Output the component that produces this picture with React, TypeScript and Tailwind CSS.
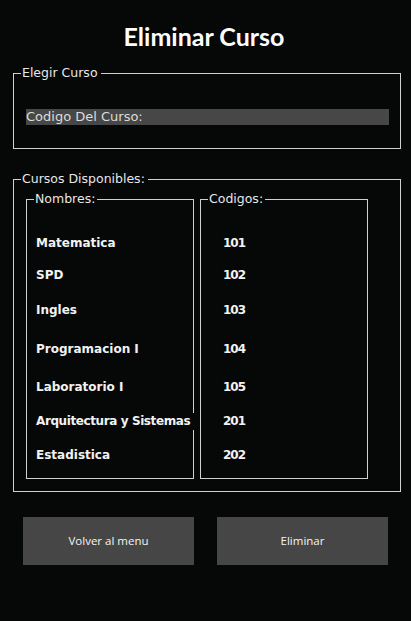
import React from "react";

const rows = [
  { name: "Matematica", code: "101", mt: "mt-[28px]" },
  { name: "SPD", code: "102", mt: "mt-[16px]" },
  { name: "Ingles", code: "103", mt: "mt-[19px]" },
  { name: "Programacion I", code: "104", mt: "mt-[23px]" },
  { name: "Laboratorio I", code: "105", mt: "mt-[22px]" },
  { name: "Arquitectura y Sistemas", code: "201", mt: "mt-[18px]" },
  { name: "Estadistica", code: "202", mt: "mt-[18px]" },
];

const dv = { fontFamily: '"DejaVu Sans", sans-serif' };

export default function App() {
  return (
    <div
      className="w-[411px] h-[621px] bg-[#060707] text-[#f2f2f2] flex flex-col overflow-hidden"
      style={dv}
    >
      <h1
        className="mt-[22px] h-[28px] leading-[28px] text-center text-[25px] font-bold text-white pr-[3px]"
        style={{ fontFamily: "Lato, sans-serif" }}
      >
        Eliminar Curso
      </h1>

      <fieldset className="ml-[13px] mt-[15px] w-[388px] min-w-0 border border-[#d0d0d0] p-0">
        <legend className="ml-[7px] pl-[1px] pr-[3px] text-[12.5px] leading-[16px] text-[#e8e8e8]">
          Elegir Curso
        </legend>
        <div className="pl-[12px] pr-[11px] pt-[28px] pb-[23px]">
          <div className="h-[16px] bg-[#474747] text-[13px] leading-[16px] text-[#dcdcdc] whitespace-nowrap">
            Codigo Del Curso:
          </div>
        </div>
      </fieldset>

      <fieldset className="ml-[13px] mt-[22px] w-[388px] min-w-0 border border-[#d0d0d0] p-0">
        <legend className="ml-[7px] pl-[1px] pr-[3px] text-[12.5px] leading-[16px] text-[#e8e8e8]">
          Cursos Disponibles:
        </legend>
        <div className="flex gap-[6px] pl-[12px] pt-[4px] pb-[12px]">
          <fieldset className="w-[168px] h-[288px] min-w-0 border border-[#d0d0d0] p-0">
            <legend className="ml-[7px] pl-[1px] pr-[2px] text-[12.5px] leading-[16px] text-[#e8e8e8]">
              Nombres:
            </legend>
            <div className="flex flex-col pl-[9px]">
              {rows.map((r) => (
                <div
                  key={r.name}
                  className={`${r.mt} h-[16px] leading-[16px] text-[12px] font-bold whitespace-nowrap`}
                >
                  {r.name === "Arquitectura y Sistemas" ? (
                    <span className="relative inline-block w-[158px] h-[17px] bg-[#060707] tracking-[-0.4px]">
                      {r.name}
                    </span>
                  ) : (
                    r.name
                  )}
                </div>
              ))}
            </div>
          </fieldset>
          <fieldset className="w-[168px] h-[288px] min-w-0 border border-[#d0d0d0] p-0">
            <legend className="ml-[7px] pl-[1px] pr-[2px] text-[12.5px] leading-[16px] text-[#e8e8e8]">
              Codigos:
            </legend>
            <div className="flex flex-col pl-[22px]">
              {rows.map((r) => (
                <div
                  key={r.code}
                  className={`${r.mt} h-[16px] leading-[16px] text-[12px] font-bold tracking-[-1px]`}
                >
                  {r.code}
                </div>
              ))}
            </div>
          </fieldset>
        </div>
      </fieldset>

      <div
        className="mt-[25px] ml-[23px] flex gap-[23px]"
        style={{ fontFamily: '"Open Sans", sans-serif' }}
      >
        <button className="w-[171px] h-[48px] bg-[#464646] text-[11.5px] text-[#f4f4f4]">
          Volver al menu
        </button>
        <button className="w-[171px] h-[48px] bg-[#464646] text-[11.5px] text-[#f4f4f4]">
          Eliminar
        </button>
      </div>
    </div>
  );
}
